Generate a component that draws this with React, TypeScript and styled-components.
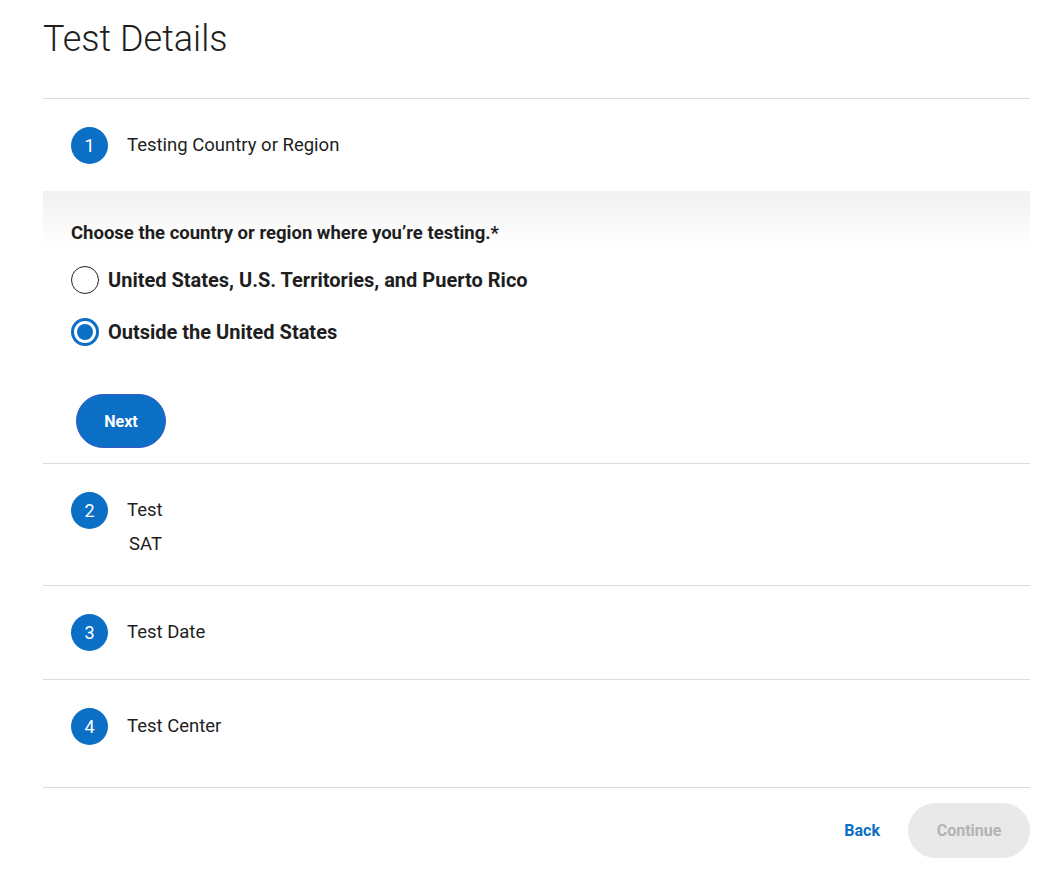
import styled, { createGlobalStyle } from "styled-components";

const GlobalStyle = createGlobalStyle`
  body {
    margin: 0;
    background: #ffffff;
    font-family: Roboto, "Liberation Sans", sans-serif;
    color: #1e1e1e;
  }
`;

const Page = styled.div`
  margin-left: 43px;
  width: 987px;
`;

const Title = styled.h1`
  margin: 0;
  padding-top: 15px;
  font-size: 36px;
  line-height: 48px;
  font-weight: 300;
  color: #1e1e1e;
  margin-bottom: 35px;
`;

const Step = styled.section`
  border-top: 1px solid #dcdcdc;
`;

const StepHeader = styled.div<{ $bottom?: number }>`
  display: flex;
  align-items: flex-start;
  gap: 19px;
  padding: 28px 0 ${(p) => p.$bottom ?? 27}px 28px;
`;

const Badge = styled.div`
  flex: none;
  width: 37px;
  height: 37px;
  border-radius: 50%;
  background: #0b6fc6;
  color: #ffffff;
  font-size: 18px;
  display: flex;
  align-items: center;
  justify-content: center;
`;

const StepText = styled.div`
  display: flex;
  flex-direction: column;
`;

const StepTitle = styled.div`
  font-size: 18.5px;
  line-height: 37px;
  color: #1e1e1e;
`;

const StepValue = styled.div`
  font-size: 18.5px;
  line-height: 22px;
  padding-left: 2px;
  margin-top: 4px;
  color: #1e1e1e;
`;

const Panel = styled.div`
  background: linear-gradient(to bottom, #f1f1f1 0px, #ffffff 56px);
  padding: 31px 28px 15px;
`;

const Question = styled.div`
  font-size: 18.5px;
  font-weight: 700;
  line-height: 22px;
  margin-bottom: 22px;
`;

const Options = styled.div`
  display: flex;
  flex-direction: column;
  gap: 24px;
`;

const Option = styled.label`
  display: flex;
  align-items: center;
  gap: 9px;
  font-size: 20px;
  font-weight: 700;
  line-height: 28px;
  cursor: pointer;
`;

const Radio = styled.span<{ $checked?: boolean }>`
  flex: none;
  box-sizing: border-box;
  width: 28px;
  height: 28px;
  border-radius: 50%;
  border: ${(p) => (p.$checked ? "3px solid #0b6fc6" : "1.5px solid #222")};
  background: #fff;
  display: flex;
  align-items: center;
  justify-content: center;

  &::after {
    content: "";
    display: ${(p) => (p.$checked ? "block" : "none")};
    width: 16px;
    height: 16px;
    border-radius: 50%;
    background: #0b6fc6;
  }
`;

const NextButton = styled.button`
  display: block;
  margin-top: 48px;
  margin-left: 5px;
  width: 90px;
  height: 54px;
  border-radius: 28px;
  border: 1px solid #3a56c4;
  background: #0b6fc6;
  color: #ffffff;
  font-family: inherit;
  font-size: 16px;
  font-weight: 700;
  cursor: pointer;
`;

const Footer = styled.div`
  border-top: 1px solid #dcdcdc;
  display: flex;
  justify-content: flex-end;
  align-items: center;
  gap: 28px;
  padding-top: 15px;
`;

const BackButton = styled.button`
  border: none;
  background: none;
  padding: 0;
  color: #0b6fc6;
  font-family: inherit;
  font-size: 16px;
  font-weight: 700;
  cursor: pointer;
`;

const ContinueButton = styled.button`
  width: 122px;
  height: 55px;
  border-radius: 28px;
  border: none;
  background: #e9e9e9;
  color: #b3b3b3;
  font-family: inherit;
  font-size: 16px;
  font-weight: 700;
`;

const steps = [
  { n: 2, title: "Test", value: "SAT", bottom: 30 },
  { n: 3, title: "Test Date", bottom: 28 },
  { n: 4, title: "Test Center", bottom: 42 },
];

export default function App() {
  return (
    <>
      <GlobalStyle />
      <Page>
        <Title>Test Details</Title>
        <Step>
          <StepHeader>
            <Badge>1</Badge>
            <StepText>
              <StepTitle>Testing Country or Region</StepTitle>
            </StepText>
          </StepHeader>
          <Panel>
            <Question>Choose the country or region where you’re testing.*</Question>
            <Options>
              <Option>
                <Radio />
                United States, U.S. Territories, and Puerto Rico
              </Option>
              <Option>
                <Radio $checked />
                Outside the United States
              </Option>
            </Options>
            <NextButton>Next</NextButton>
          </Panel>
        </Step>
        {steps.map((s) => (
          <Step key={s.n}>
            <StepHeader $bottom={s.bottom}>
              <Badge>{s.n}</Badge>
              <StepText>
                <StepTitle>{s.title}</StepTitle>
                {s.value && <StepValue>{s.value}</StepValue>}
              </StepText>
            </StepHeader>
          </Step>
        ))}
        <Footer>
          <BackButton>Back</BackButton>
          <ContinueButton>Continue</ContinueButton>
        </Footer>
      </Page>
    </>
  );
}
